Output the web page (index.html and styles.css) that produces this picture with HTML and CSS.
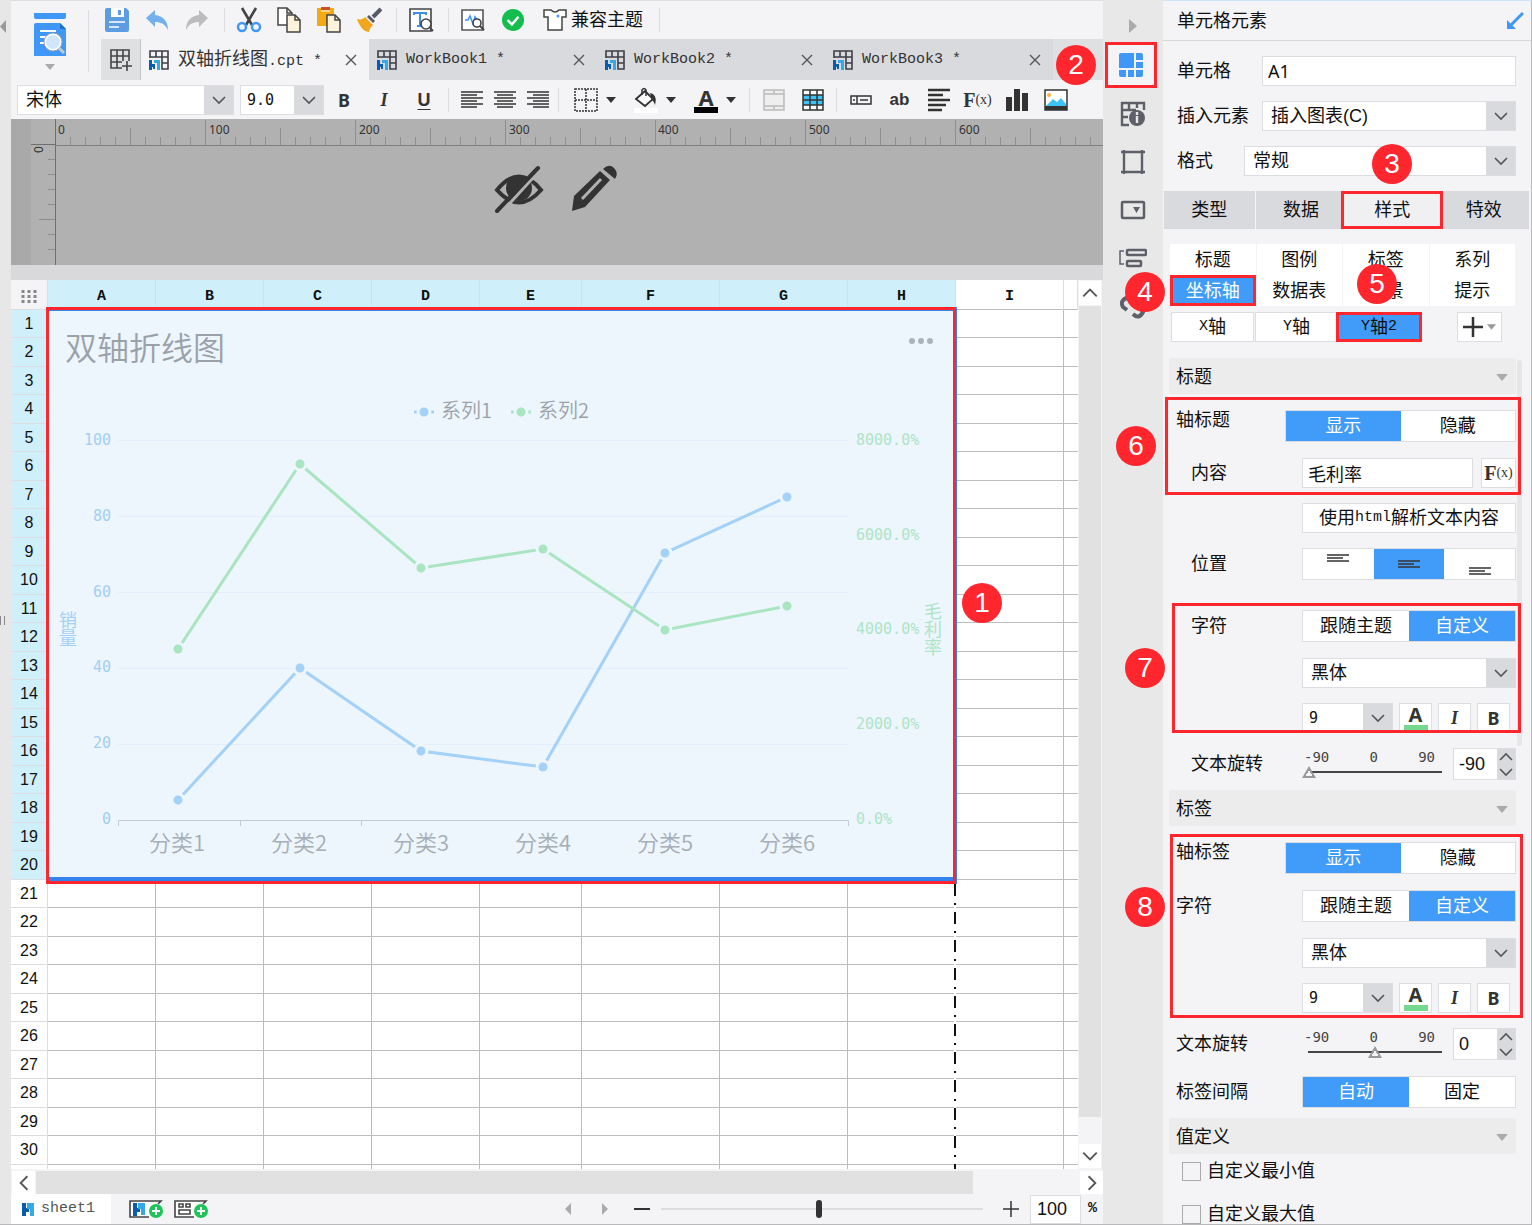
FILE: index.html
```html
<!DOCTYPE html>
<html lang="zh-CN">
<head>
    <meta charset="UTF-8">
    <meta name="viewport" content="width=device-width, initial-scale=1.0">
    <title>双轴折线图.cpt</title>
    <link rel="stylesheet" href="styles.css">
</head>
<body>
    <!-- shared icons -->
    <svg class="sprite" aria-hidden="true">
        <symbol id="i-down" viewBox="0 0 16 16"><path d="M2 5l6 6 6-6" fill="none" stroke="#555" stroke-width="1.6"/></symbol>
        <symbol id="i-caret" viewBox="0 0 10 6"><path d="M0 0h10L5 6z" fill="currentColor"/></symbol>
        <symbol id="i-book" viewBox="0 0 20 20">
            <path d="M1 8V1h18v18h-6V7M1 7h18M7 1v6M13 1v6M13 13h6" fill="none" stroke="#3c3f45" stroke-width="1.6"/>
            <path d="M0 10h3v4h3v5H4v-2H3v3H0z" fill="#0a5cad"/><path d="M5 10h6v10H8v-7H5z" fill="#35a8e6"/>
        </symbol>
        <symbol id="i-close" viewBox="0 0 12 12"><path d="M1 1l10 10M11 1L1 11" stroke="#555" stroke-width="1.4"/></symbol>
        <symbol id="i-lines" viewBox="0 0 22 8"><path d="M0 1h22M0 4h16M0 7h22" stroke="#333" stroke-width="1.5"/></symbol>
        <symbol id="i-plus-dot" viewBox="0 0 14 14"><circle cx="7" cy="7" r="7" fill="#1dc457"/><path d="M7 3v8M3 7h8" stroke="#fff" stroke-width="2"/></symbol>
    </svg>

    <div class="app">
        <div class="edge">
            <svg class="edge-arrow" viewBox="0 0 6 13"><path d="M6 0v13L0 6.500z" fill="#999"/></svg>
            <span class="edge-grip"></span>
        </div>

        <main class="workspace">
            <header class="top">
                <button class="preview" aria-label="预览">
                    <svg width="34" height="46" viewBox="0 0 34 46">
                        <path d="M1 0h32v4q0 2-2 2H3q-2 0-2-2z" fill="#3f98f8"/>
                        <path d="M3 10h24l6 6v27H1V12q0-2 2-2z" fill="#3f98f8"/><path d="M27 10v6h6z" fill="#1f6fc8"/>
                        <path d="M7 18h16M7 24h8M7 30h8" stroke="#fff" stroke-width="2"/>
                        <circle cx="20" cy="29" r="8" fill="#cfe6fb" stroke="#fff" stroke-width="2"/>
                        <circle cx="20" cy="29" r="9" fill="none" stroke="#9aa3ad" stroke-width="1"/>
                        <path d="M26 35l5 5" stroke="#c5c9ce" stroke-width="3"/>
                    </svg>
                    <svg class="caret" width="10" height="6"><use href="#i-caret"/></svg>
                </button>
                <div class="top-main">
                    <div class="toolbar">
                        <button aria-label="保存"><svg width="26" height="26" viewBox="0 0 26 26"><path d="M1 3q0-2 2-2h19l3 3v19q0 2-2 2H3q-2 0-2-2z" fill="#5c9ce0"/><path d="M7 1h13v9H7z" fill="#fff"/><path d="M14 3h3v5h-3z" fill="#5c9ce0"/><path d="M5 15h16M5 20h10" stroke="#fff" stroke-width="1.600"/></svg></button>
                        <button aria-label="撤销"><svg width="24" height="24" viewBox="0 0 24 24"><path d="M10 2v5c8 1 13 6 13 15-3-6-7-8-13-8v5L1 10z" fill="#72b0ee"/></svg></button>
                        <button aria-label="重做"><svg width="24" height="24" viewBox="0 0 24 24"><path d="M14 2v5C6 8 1 13 1 22c3-6 7-8 13-8v5l9-9z" fill="#bcbcbe"/></svg></button>
                        <span class="sep"></span>
                        <button aria-label="剪切"><svg width="26" height="26" viewBox="0 0 26 26"><path d="M6 1l10 17M20 1L10 18" stroke="#444" stroke-width="2.600"/><circle cx="6" cy="20" r="4" fill="none" stroke="#3f98f8" stroke-width="2.500"/><circle cx="20" cy="20" r="4" fill="none" stroke="#3f98f8" stroke-width="2.500"/></svg></button>
                        <button aria-label="复制"><svg width="26" height="26" viewBox="0 0 26 26"><path d="M2 1h9l5 5v12H2z" fill="#fff" stroke="#444" stroke-width="1.500"/><path d="M11 8h8l5 5v12H11z" fill="#fdf3da" stroke="#444" stroke-width="1.500"/><path d="M11 1v5h5M19 8v5h5" fill="none" stroke="#444" stroke-width="1.500"/></svg></button>
                        <button aria-label="粘贴"><svg width="26" height="26" viewBox="0 0 26 26"><path d="M1 1h17v18H1z" fill="#f2ab16"/><path d="M5 0h9v3H5z" fill="#c9502a"/><path d="M5 4h9" stroke="#fff"/><path d="M11 8h8l5 5v12H11z" fill="#fdf3da" stroke="#444" stroke-width="1.500"/><path d="M19 8v5h5" fill="none" stroke="#444" stroke-width="1.500"/></svg></button>
                        <button aria-label="格式刷"><svg width="26" height="26" viewBox="0 0 26 26"><path d="M25 2l-8 8" stroke="#555a66" stroke-width="4"/><path d="M13 8l6 6-2 2-6-6z" fill="#555a66"/><path d="M1 12c4 1 6 0 8-2l8 8c-3 3-4 5-4 7-4 0-9-4-12-13z" fill="#f2a51e"/></svg></button>
                        <span class="sep"></span>
                        <button aria-label="查找"><svg width="26" height="26" viewBox="0 0 26 26"><path d="M2 2h21v22H2z" fill="#fff" stroke="#444" stroke-width="1.600"/><path d="M6 8V6h12v2M12 6v13M9 19h5" fill="none" stroke="#3f8de8" stroke-width="2"/><circle cx="18" cy="17" r="5" fill="#fff" stroke="#444" stroke-width="1.600"/><path d="M22 21l3 3" stroke="#444" stroke-width="2"/></svg></button>
                        <span class="sep"></span>
                        <button aria-label="性能检测"><svg width="24" height="24" viewBox="0 0 24 24"><path d="M1 2h21v20H1z" fill="#fff" stroke="#555" stroke-width="1.600"/><path d="M4 12h3l2-4 3 8 2-7 2 3" fill="none" stroke="#3f98f8" stroke-width="1.600"/><circle cx="16" cy="15" r="4" fill="#fff" stroke="#444" stroke-width="1.600"/><path d="M19 18l4 4" stroke="#444" stroke-width="2"/></svg></button>
                        <button aria-label="校验"><svg width="22" height="22" viewBox="0 0 20 20"><circle cx="10" cy="10" r="10" fill="#14bd4e"/><path d="M5 10l4 4 6-7" fill="none" stroke="#fff" stroke-width="2.200"/></svg></button>
                        <button class="theme"><svg width="24" height="22" viewBox="0 0 24 22"><path d="M1 1h7q4 4 8 0h7v7h-4v13H5V8H1z" fill="#fff" stroke="#444" stroke-width="1.500"/><circle cx="15" cy="7" r="1.500" fill="#3f98f8"/></svg>兼容主题</button>
                        <span class="sep"></span>
                    </div>
                    <nav class="tabs">
                        <button class="new-tab" aria-label="新建"><svg width="22" height="22" viewBox="0 0 22 22"><path d="M12 19H1V1h18v11M1 7h18M1 13h11M7 1v18M13 1v11" fill="none" stroke="#444" stroke-width="1.600"/><path d="M17 12v10M12 17h10" stroke="#444" stroke-width="1.600"/></svg></button>
                        <div class="tab active"><svg width="20" height="20"><use href="#i-book"/></svg><span>双轴折线图<span class="mono">.cpt *</span></span><button aria-label="关闭"><svg width="12" height="12"><use href="#i-close"/></svg></button></div>
                        <div class="tab"><svg width="20" height="20"><use href="#i-book"/></svg><span class="mono">WorkBook1 *</span><button aria-label="关闭"><svg width="12" height="12"><use href="#i-close"/></svg></button></div>
                        <div class="tab"><svg width="20" height="20"><use href="#i-book"/></svg><span class="mono">WorkBook2 *</span><button aria-label="关闭"><svg width="12" height="12"><use href="#i-close"/></svg></button></div>
                        <div class="tab"><svg width="20" height="20"><use href="#i-book"/></svg><span class="mono">WorkBook3 *</span><button aria-label="关闭"><svg width="12" height="12"><use href="#i-close"/></svg></button></div>
                        <span class="badge badge-2">2</span>
                    </nav>
                </div>
            </header>

            <div class="format-bar">
                <div class="select font-family"><select aria-label="字体"><option>宋体</option></select><span class="arrow"><svg width="16" height="16"><use href="#i-down"/></svg></span></div>
                <div class="select font-size"><select aria-label="字号" class="digits"><option>9.0</option></select><span class="arrow"><svg width="16" height="16"><use href="#i-down"/></svg></span></div>
                <button class="fmt bold">B</button>
                <button class="fmt italic">I</button>
                <button class="fmt underline">U</button>
                <span class="sep"></span>
                <button class="fmt align" aria-label="左对齐"><svg width="22" height="18" viewBox="0 0 22 18"><path d="M0 1h22M0 4h16M0 7h22M0 10h16M0 13h22M0 16h16" stroke="#333" stroke-width="1.500"/></svg></button>
                <button class="fmt align" aria-label="居中"><svg width="22" height="18" viewBox="0 0 22 18"><path d="M0 1h22M3 4h16M0 7h22M3 10h16M0 13h22M3 16h16" stroke="#333" stroke-width="1.500"/></svg></button>
                <button class="fmt align" aria-label="右对齐"><svg width="22" height="18" viewBox="0 0 22 18"><path d="M0 1h22M6 4h16M0 7h22M6 10h16M0 13h22M6 16h16" stroke="#333" stroke-width="1.500"/></svg></button>
                <span class="sep"></span>
                <button class="fmt drop" aria-label="边框"><svg width="24" height="24" viewBox="0 0 24 24"><path d="M1 1h22v22H1zM12 1v22M1 12h22" fill="none" stroke="#333" stroke-width="1.500" stroke-dasharray="2 1"/></svg><svg width="10" height="6"><use href="#i-caret"/></svg></button>
                <button class="fmt drop" aria-label="填充"><svg width="24" height="26" viewBox="0 0 24 26"><path d="M2 12l9-8 8 8-8 7z" fill="#fff" stroke="#333" stroke-width="1.800"/><path d="M8 8V3q2-3 4 0v6" fill="none" stroke="#333" stroke-width="1.500"/><path d="M16 6c5 1 7 5 5 12-1-3-2-4-3-5z" fill="#333"/><path d="M0 21h24v5H0z" fill="#fff"/></svg><svg width="10" height="6"><use href="#i-caret"/></svg></button>
                <button class="fmt drop" aria-label="字体颜色"><span class="color-a">A</span><svg width="10" height="6"><use href="#i-caret"/></svg></button>
                <span class="sep"></span>
                <button class="fmt tool" aria-label="合并"><svg width="22" height="22" viewBox="0 0 22 22"><path d="M1 1h20v20H1zM1 5h20M1 17h20M11 1v4M11 17v4" fill="#eee" stroke="#bbb" stroke-width="1.500"/></svg></button>
                <button class="fmt tool" aria-label="表格"><svg width="22" height="22" viewBox="0 0 22 22"><path d="M1 1h20v20H1z" fill="#fff"/><path d="M1 6h20v10H1z" fill="#3ec3f7"/><path d="M1 1h20v20H1zM1 6h20M1 11h20M1 16h20M8 1v20M15 1v20" fill="none" stroke="#333" stroke-width="1.500"/></svg></button>
                <span class="sep"></span>
                <button class="fmt tool" aria-label="控件"><svg width="22" height="10" viewBox="0 0 22 10"><path d="M1 1h20v8H1zM7 1v8M10 5h8M3 5h2" fill="none" stroke="#333" stroke-width="1.500"/></svg></button>
                <button class="fmt tool ab">ab</button>
                <button class="fmt tool" aria-label="富文本"><svg width="22" height="24" viewBox="0 0 22 24"><path d="M0 2h22M0 7h15M0 12h22M0 17h18M0 22h14" stroke="#333" stroke-width="2.400"/></svg></button>
                <button class="fmt tool fx">F<small>(x)</small></button>
                <button class="fmt tool" aria-label="图表"><svg width="22" height="24" viewBox="0 0 22 24"><path d="M0 9h6v14H0zM8 1h6v22H8zM16 5h6v18h-6z" fill="#333"/></svg></button>
                <button class="fmt tool" aria-label="图片"><svg width="24" height="22" viewBox="0 0 24 22"><path d="M1 1h22v20H1z" fill="#fff" stroke="#333" stroke-width="1.500"/><circle cx="5" cy="6" r="2" fill="#ffb42e"/><path d="M2 17l7-7 4 3 4-4 5 6v2z" fill="#3ec3f7"/><path d="M1 17h22v4H1z" fill="#333"/></svg></button>
            </div>

            <section class="canvas">
                <svg class="ruler" width="100%" height="146" aria-hidden="true">
                    <defs>
                        <pattern id="minor" x="44" y="0" width="15" height="26" patternUnits="userSpaceOnUse"><path d="M.5 18v8" stroke="#8e8e8e"/></pattern>
                        <pattern id="mid" x="44" y="0" width="75" height="26" patternUnits="userSpaceOnUse"><path d="M.5 9v17" stroke="#8e8e8e"/></pattern>
                        <pattern id="major" x="44" y="0" width="150" height="26" patternUnits="userSpaceOnUse"><path d="M.5 1v25" stroke="#8e8e8e"/></pattern>
                    </defs>
                    <rect width="20" height="146" fill="#a9a9a9"/>
                    <rect x="44" width="100%" height="26" fill="url(#minor)"/>
                    <rect x="44" width="100%" height="26" fill="url(#mid)"/>
                    <rect x="44" width="100%" height="26" fill="url(#major)"/>
                    <path d="M44.500 0v146M20 25.500h24" stroke="#6f6f6f" fill="none"/>
                    <rect x="45" y="26" width="100%" height="1" fill="#808080"/>
                    <path d="M37 40.500h7M37 55.500h7M37 70.500h7M37 85.500h7M28 100.500h16M37 115.500h7M37 130.500h7" stroke="#8e8e8e"/>
                    <g class="ruler-text">
                        <text x="47" y="15">0</text><text x="198" y="15">100</text><text x="348" y="15">200</text><text x="498" y="15">300</text><text x="647" y="15">400</text><text x="798" y="15">500</text><text x="948" y="15">600</text>
                        <text transform="translate(32 34) rotate(-90)">0</text>
                    </g>
                </svg>
                <div class="canvas-actions">
                    <button aria-label="隐藏"><svg width="50" height="48" viewBox="0 0 50 48"><path d="M3 25Q25-2 47 25 25 50 3 25z" fill="none" stroke="#333" stroke-width="4"/><circle cx="25" cy="23" r="13" fill="#333"/><path d="M47 4L7 48" stroke="#b1b1b1" stroke-width="3"/><path d="M44 3L3 46" stroke="#333" stroke-width="4" stroke-linecap="round"/></svg></button>
                    <button aria-label="编辑"><svg width="48" height="48" viewBox="0 0 48 48"><path d="M1 46l2-15L29 6l10 9-25 27z" fill="#333"/><path d="M11 34L30 14" stroke="#b1b1b1" stroke-width="3"/><path d="M32 4q6-6 11-1t1 11z" fill="#333"/></svg></button>
                </div>
            </section>

            <div class="sheet-wrap">
                <div class="sheet">
                    <table>
                        <colgroup><col class="c-head"><col class="c-m"><col class="c-m"><col class="c-m"><col class="c-m"><col class="c-s"><col class="c-xl"><col class="c-l"><col class="c-m"><col class="c-m"><col></colgroup>
                        <thead>
                            <tr>
                                <th class="corner"><svg width="16" height="14" viewBox="0 0 16 14"><path d="M2 0v14M8 0v14M14 0v14" stroke="#888" stroke-width="3" stroke-dasharray="3 2"/></svg></th>
                                <th class="on">A</th><th class="on">B</th><th class="on">C</th><th class="on">D</th><th class="on">E</th><th class="on">F</th><th class="on">G</th><th class="on">H</th><th>I</th><th></th>
                            </tr>
                        </thead>
                        <tbody id="rows">
                            <tr>
                                <th class="on">1</th>
                                <td class="chart-cell" colspan="8" rowspan="20">
                                    <svg class="chart" viewBox="48 310 908 570">
                                        <text class="chart-title" x="65" y="360">双轴折线图</text>
                                        <g fill="#aab2bb"><circle cx="912" cy="341" r="3"/><circle cx="921" cy="341" r="3"/><circle cx="930" cy="341" r="3"/></g>
                                        <g class="s1"><path d="M414 412h20"/><circle cx="424" cy="412" r="6"/></g>
                                        <text class="legend" x="441" y="418">系列1</text>
                                        <g class="s2"><path d="M511 412h20"/><circle cx="521" cy="412" r="6"/></g>
                                        <text class="legend" x="538" y="418">系列2</text>
                                        <path d="M118 440.500h730M118 516.500h730M118 592.500h730M118 668.500h730M118 744.500h730" stroke="#e3edfb"/>
                                        <path d="M118.500 826v-5.500h730v5.500M240.500 820v6M361.500 820v6" fill="none" stroke="#c3cbd4"/>
                                        <g class="axis left"><text x="111" y="445">100</text><text x="111" y="521">80</text><text x="111" y="597">60</text><text x="111" y="672">40</text><text x="111" y="748">20</text><text x="111" y="824">0</text></g>
                                        <g class="axis right"><text x="856" y="445">8000.0%</text><text x="856" y="540">6000.0%</text><text x="856" y="634">4000.0%</text><text x="856" y="729">2000.0%</text><text x="856" y="824">0.0%</text></g>
                                        <g class="axis-name left"><text x="68" y="627">销</text><text x="68" y="645">量</text></g>
                                        <g class="axis-name right"><text x="933" y="618">毛</text><text x="933" y="636">利</text><text x="933" y="654">率</text></g>
                                        <g class="category"><text x="177" y="851">分类1</text><text x="299" y="851">分类2</text><text x="421" y="851">分类3</text><text x="543" y="851">分类4</text><text x="665" y="851">分类5</text><text x="787" y="851">分类6</text></g>
                                        <g class="s1"><path d="M178 800L300 668 421 751 543 767 665 553 787 497"/><circle cx="178" cy="800" r="6"/><circle cx="300" cy="668" r="6"/><circle cx="421" cy="751" r="6"/><circle cx="543" cy="767" r="6"/><circle cx="665" cy="553" r="6"/><circle cx="787" cy="497" r="6"/></g>
                                        <g class="s2"><path d="M178 649L300 464 421 568 543 549 665 630 787 606"/><circle cx="178" cy="649" r="6"/><circle cx="300" cy="464" r="6"/><circle cx="421" cy="568" r="6"/><circle cx="543" cy="549" r="6"/><circle cx="665" cy="630" r="6"/><circle cx="787" cy="606" r="6"/></g>
                                    </svg>
                                    <span class="selection"></span>
                                    <span class="badge badge-1">1</span>
                                    <span class="page-break"></span>
                                </td>
                                <td></td><td></td>
                            </tr>
                        </tbody>
                    </table>
                </div>
                <div class="v-scroll">
                    <button aria-label="向上"><svg class="up" width="18" height="18"><use href="#i-down"/></svg></button>
                    <span class="v-thumb"></span>
                    <button aria-label="向下"><svg width="18" height="18"><use href="#i-down"/></svg></button>
                </div>
            </div>

            <div class="h-scroll">
                <button aria-label="向左"><svg class="to-left" width="18" height="18"><use href="#i-down"/></svg></button>
                <span class="h-thumb"></span>
                <button aria-label="向右"><svg class="to-right" width="18" height="18"><use href="#i-down"/></svg></button>
            </div>

            <footer class="status">
                <button class="sheet-tab mono"><svg width="12" height="13" viewBox="0 0 12 13"><path d="M0 0h4v5h3v4H4v4H0z" fill="#0a5cad"/><path d="M5 0h7v13H8V6H5z" fill="#35a8e6"/></svg>sheet1</button>
                <button aria-label="新建报表"><svg width="34" height="20" viewBox="0 0 34 20"><path d="M20 18H1V2h31l-3 3" fill="#fff" stroke="#444" stroke-width="1.600"/><path d="M4 4h4v5h3v4H8v4H4z" fill="#0a5cad"/><path d="M9 4h7v12h-4v-6H9z" fill="#35a8e6"/><use href="#i-plus-dot" x="20" y="5" width="14" height="14"/></svg></button>
                <button aria-label="新建聚合"><svg width="34" height="20" viewBox="0 0 34 20"><path d="M20 18H1V2h31l-3 3" fill="#fff" stroke="#444" stroke-width="1.600"/><path d="M5 5h4v3H5zM12 5h4v3h-4zM5 11h11v4H5z" fill="none" stroke="#444" stroke-width="1.600"/><use href="#i-plus-dot" x="20" y="5" width="14" height="14"/></svg></button>
                <div class="zoom">
                    <button class="page" aria-label="上一页"><svg width="6" height="12" viewBox="0 0 6 12"><path d="M6 0v12L0 6z" fill="#aaa"/></svg></button>
                    <button class="page" aria-label="下一页"><svg width="6" height="12" viewBox="0 0 6 12"><path d="M0 0v12l6-6z" fill="#aaa"/></svg></button>
                    <button class="step" aria-label="缩小"><svg width="16" height="16" viewBox="0 0 16 16"><path d="M0 8h16" stroke="#333" stroke-width="2"/></svg></button>
                    <input class="zoom-range" type="range" min="10" max="194" value="100" aria-label="缩放">
                    <button class="step" aria-label="放大"><svg width="16" height="16" viewBox="0 0 16 16"><path d="M0 8h16M8 0v16" stroke="#333" stroke-width="1.500"/></svg></button>
                    <input class="zoom-value" id="zoomValue" type="text" value="100"><label class="mono" for="zoomValue">%</label>
                </div>
            </footer>
        </main>

        <nav class="dock">
            <button class="collapse" aria-label="收起"><svg width="8" height="14" viewBox="0 0 8 14"><path d="M0 0v14l8-7z" fill="#aaa"/></svg></button>
            <button class="active" aria-label="单元格元素"><svg width="26" height="26" viewBox="0 0 26 26" fill="#3f98f8"><path d="M1 3q0-2 2-2h13v15H1zM18 1h5q2 0 2 2v5h-7zM18 10h7v6h-7zM1 18h7v7H3q-2 0-2-2zM10 18h6v7h-6zM18 18h7v5q0 2-2 2h-5z"/></svg></button>
            <button aria-label="单元格属性"><svg width="26" height="26" viewBox="0 0 26 26" fill="none" stroke="#5d6069" stroke-width="2.400"><path d="M9 24H2V2h22v7M2 9h14M2 16h6M9 2v8M17 2v5"/><circle cx="17" cy="17" r="8" fill="#5d6069" stroke="none"/><path d="M17 15v7M17 11v3" stroke="#e8e8e8"/></svg></button>
            <button aria-label="悬浮元素"><svg width="26" height="26" viewBox="0 0 26 26" fill="none" stroke="#5d6069" stroke-width="2.400"><path d="M4 1v24M22 1v24M1 3h24M1 23h24"/></svg></button>
            <button aria-label="控件设置"><svg width="26" height="20" viewBox="0 0 26 20"><rect x="2" y="2" width="22" height="16" rx="1" fill="none" stroke="#5d6069" stroke-width="2.500"/><path d="M13 7h7l-3.500 6z" fill="#5d6069"/></svg></button>
            <button aria-label="条件属性"><svg width="28" height="20" viewBox="0 0 28 20" fill="none" stroke="#5d6069"><path d="M5 3H1v13h4" stroke-width="1.500"/><rect x="8" y="2" width="19" height="5" rx="1" stroke-width="2.500"/><rect x="8" y="13" width="14" height="5" rx="1" stroke-width="2.500"/></svg></button>
            <button aria-label="超级链接"><svg width="26" height="26" viewBox="0 0 26 26" fill="none" stroke="#5d6069" stroke-width="4"><path d="M9 4q-10 3-6 10l4 3M13 21q6 6 10-2l-6-9"/></svg></button>
        </nav>

        <aside class="panel">
            <h2>单元格元素<svg width="18" height="18" viewBox="0 0 18 18"><path d="M17 1L5 13" stroke="#3f98f8" stroke-width="3"/><path d="M1 8v9h9z" fill="#3f98f8"/></svg></h2>

            <div class="fields">
                <div class="row"><label class="w-long" for="cell">单元格</label><input class="box grow arial" id="cell" type="text" value="A1"></div>
                <div class="row"><label class="w-long" for="insert">插入元素</label><div class="select grow"><select id="insert"><option>插入图表(C)</option></select><span class="arrow"><svg width="16" height="16"><use href="#i-down"/></svg></span></div></div>
                <div class="row"><label class="w-short" for="format">格式</label><div class="select grow"><select id="format"><option>常规</option></select><span class="arrow"><svg width="16" height="16"><use href="#i-down"/></svg></span></div></div>
                <span class="badge badge-3">3</span>
            </div>

            <div class="main-tabs"><button>类型</button><button>数据</button><button class="active">样式</button><button>特效</button></div>

            <div class="sub-tabs">
                <button>标题</button><button>图例</button><button>标签</button><button>系列</button>
                <button class="active">坐标轴</button><button>数据表</button><button>背景</button><button>提示</button>
                <span class="badge badge-4">4</span><span class="badge badge-5">5</span>
            </div>

            <div class="axis-tabs">
                <button><span class="mono">X</span>轴</button><button><span class="mono">Y</span>轴</button><button class="active"><span class="mono">Y</span>轴<span class="mono">2</span></button>
                <button class="add" aria-label="添加"><svg width="20" height="20" viewBox="0 0 20 20"><path d="M10 0v20M0 10h20" stroke="#333" stroke-width="2.500"/></svg><svg width="9" height="6"><use href="#i-caret"/></svg></button>
            </div>

            <div class="options">
                <span class="panel-thumb"></span>
                <h3>标题<svg width="12" height="7"><use href="#i-caret"/></svg></h3>
                <div class="group mark-6">
                    <div class="row tall"><span class="name high">轴标题</span><div class="seg wide"><button class="active">显示</button><button>隐藏</button></div></div>
                    <div class="row"><label class="name sub" for="content">内容</label><div class="control"><input class="box grow" id="content" type="text" value="毛利率"><button class="box fx">F<small>(x)</small></button></div></div>
                    <span class="badge badge-6">6</span>
                </div>
                <div class="row"><div class="control"><button class="box grow">使用<span class="mono">html</span>解析文本内容</button></div></div>
                <div class="row tall spaced"><span class="name sub">位置</span><div class="seg pos"><button aria-label="上"><svg width="22" height="8"><use href="#i-lines"/></svg></button><button class="active" aria-label="中"><svg width="22" height="8"><use href="#i-lines"/></svg></button><button aria-label="下"><svg width="22" height="8"><use href="#i-lines"/></svg></button></div></div>
                <div class="group mark-7">
                    <div class="row tall"><span class="name sub">字符</span><div class="seg"><button>跟随主题</button><button class="active">自定义</button></div></div>
                    <div class="row"><div class="control"><div class="select grow"><select aria-label="标题字体"><option>黑体</option></select><span class="arrow"><svg width="16" height="16"><use href="#i-down"/></svg></span></div></div></div>
                    <div class="row"><div class="control fonts"><div class="select size"><select class="digits" aria-label="标题字号"><option>9</option></select><span class="arrow"><svg width="16" height="16"><use href="#i-down"/></svg></span></div><button class="box"><span class="color-a green">A</span></button><button class="box italic">I</button><button class="box bold">B</button></div></div>
                    <span class="badge badge-7">7</span>
                </div>
                <div class="row tall tight"><label class="name sub" for="rotateTitle">文本旋转</label>
                    <div class="control"><div class="rotate"><div class="ticks"><span>-90</span><span>0</span><span>90</span></div><input id="rotateTitle" type="range" min="-90" max="90" value="-90"></div>
                    <div class="spinner"><input type="text" value="-90" aria-label="角度"><div><button aria-label="增加"><svg class="up" width="16" height="16"><use href="#i-down"/></svg></button><button aria-label="减少"><svg width="16" height="16"><use href="#i-down"/></svg></button></div></div></div>
                </div>

                <h3>标签<svg width="12" height="7"><use href="#i-caret"/></svg></h3>
                <div class="group mark-8">
                    <div class="row tall"><span class="name high">轴标签</span><div class="seg wide"><button class="active">显示</button><button>隐藏</button></div></div>
                    <div class="row tall"><span class="name">字符</span><div class="seg"><button>跟随主题</button><button class="active">自定义</button></div></div>
                    <div class="row"><div class="control"><div class="select grow"><select aria-label="标签字体"><option>黑体</option></select><span class="arrow"><svg width="16" height="16"><use href="#i-down"/></svg></span></div></div></div>
                    <div class="row"><div class="control fonts"><div class="select size"><select class="digits" aria-label="标签字号"><option>9</option></select><span class="arrow"><svg width="16" height="16"><use href="#i-down"/></svg></span></div><button class="box"><span class="color-a green">A</span></button><button class="box italic">I</button><button class="box bold">B</button></div></div>
                    <span class="badge badge-8">8</span>
                </div>
                <div class="row tall"><label class="name" for="rotateLabel">文本旋转</label>
                    <div class="control"><div class="rotate"><div class="ticks"><span>-90</span><span>0</span><span>90</span></div><input id="rotateLabel" type="range" min="-90" max="90" value="0"></div>
                    <div class="spinner"><input type="text" value="0" aria-label="角度"><div><button aria-label="增加"><svg class="up" width="16" height="16"><use href="#i-down"/></svg></button><button aria-label="减少"><svg width="16" height="16"><use href="#i-down"/></svg></button></div></div></div>
                </div>
                <div class="row tall tight"><span class="name">标签间隔</span><div class="seg"><button class="active">自动</button><button>固定</button></div></div>

                <h3 class="last">值定义<svg width="12" height="7"><use href="#i-caret"/></svg></h3>
                <label class="check"><input type="checkbox">自定义最小值</label>
                <label class="check"><input type="checkbox">自定义最大值</label>
            </div>
        </aside>
    </div>

    <script src="script.js"></script>
</body>
</html>
```

FILE: styles.css
```css
* {
    box-sizing: border-box;
}
body {
    margin: 0;
    font-family: "Liberation Sans", "Noto Sans CJK SC", sans-serif;
    font-size: 18px;
    line-height: 24px;
    color: #111;
    background-color: #f4f4f6;
}
button, input, select {
    font: inherit;
    color: inherit;
    margin: 0;
    padding: 0;
    border: none;
    background: none;
    border-radius: 0;
    outline: none;
}
button {
    cursor: pointer;
    display: flex;
    align-items: center;
    justify-content: center;
}
svg {
    flex: none;
    display: block;
}
.sprite {
    position: absolute;
    width: 0;
    height: 0;
}
.mono {
    font-family: "Liberation Mono", "Noto Sans CJK SC", monospace;
    font-size: 15px;
}
.digits {
    font-family: "DejaVu Sans Mono", monospace;
    font-size: 15px;
}
.grow {
    flex: 1;
    min-width: 0;
}
.up {
    transform: rotate(180deg);
}
.to-left {
    transform: rotate(90deg);
}
.to-right {
    transform: rotate(-90deg);
}
.app {
    display: flex;
    height: 100vh;
    overflow: hidden;
    border-bottom: 1px solid #b9b9bb;
}

/* left edge */
.edge {
    width: 11px;
    background-color: #e7e7e7;
    display: flex;
    flex-direction: column;
    justify-content: space-between;
    padding: 20px 0 599px;
}
.edge-arrow {
    width: 6px;
    height: 13px;
}
.edge-grip {
    width: 5px;
    height: 9px;
    border-left: 1px solid #888;
    border-right: 1px solid #888;
}

/* toolbars */
.workspace {
    flex: 1;
    min-width: 0;
    display: flex;
    flex-direction: column;
}
.top {
    display: flex;
    height: 80px;
    border-top: 1px solid #dedee0;
}
.preview {
    width: 78px;
    flex-direction: column;
    gap: 5px;
    border-right: 1px solid #dcdcde;
    margin: 9px 0 8px;
}
.caret {
    color: #aaa;
}
.top-main {
    flex: 1;
    min-width: 0;
    display: flex;
    flex-direction: column;
}
.toolbar {
    flex: 1;
    display: flex;
    align-items: center;
    padding-left: 8px;
}
.toolbar button {
    width: 40px;
    height: 36px;
}
.toolbar .theme {
    width: auto;
    gap: 4px;
    padding: 0 9px 0 10px;
}
.sep {
    width: 1px;
    height: 24px;
    background-color: #dcdcde;
    margin: 0 4px 0 7px;
}
.tabs {
    position: relative;
    display: flex;
    height: 41px;
    margin-left: 12px;
    background-color: #dfe0e2;
}
.new-tab {
    width: 40px;
    border-right: 1px solid #c5c5c7;
}
.tab {
    width: 228px;
    display: flex;
    align-items: center;
    padding: 1px 12px 0 8px;
    gap: 9px;
    background-color: #d9dade;
    color: #333;
    white-space: nowrap;
}
.tab.active {
    background-color: #f4f4f6;
}
.tab button {
    margin-left: auto;
}
.format-bar {
    height: 39px;
    display: flex;
    align-items: center;
    padding-left: 6px;
}
.font-family {
    width: 217px;
    margin-right: 6px;
}
.font-size {
    width: 84px;
}
.format-bar .sep {
    margin: 0 4px;
}
.format-bar .underline + .sep, .format-bar .align + .sep {
    margin-right: 6px;
}
.fmt {
    height: 32px;
    color: #333;
}
.fmt.bold, .fmt.italic, .fmt.underline {
    width: 40px;
}
.bold {
    font-family: "Noto Sans", sans-serif;
    font-weight: bold;
    color: #333;
}
.italic {
    font-family: "Liberation Serif", serif;
    font-style: italic;
    font-weight: bold;
    color: #333;
}
.fmt.underline {
    font-weight: bold;
    text-decoration: underline;
    text-underline-offset: 3px;
}
.align {
    width: 33px;
}
.format-bar .drop {
    width: 60px;
    gap: 8px;
}
.tool {
    width: 39px;
}
.ab {
    font-weight: bold;
    font-size: 17px;
}
.fx {
    font-family: "Liberation Serif", serif;
    font-weight: bold;
    font-size: 20px;
    color: #333;
}
.fx small {
    font-size: 14px;
    font-weight: normal;
}
.color-a {
    width: 24px;
    height: 26px;
    font-family: "Noto Sans", sans-serif;
    font-size: 22px;
    line-height: 20px;
    font-weight: bold;
    color: #333;
    border-bottom: 6px solid #000;
}
.color-a.green {
    height: 25px;
    font-size: 20px;
    line-height: 18px;
    border-color: #74d98e;
}

/* inputs */
.select {
    position: relative;
    height: 30px;
    border: 1px solid #dcdde0;
    background-color: #fff;
}
.select select {
    width: 100%;
    height: 28px;
    padding: 0 30px 0 8px;
    appearance: none;
}
.select .digits {
    padding-left: 6px;
}
.arrow {
    position: absolute;
    top: 0;
    right: 0;
    width: 29px;
    height: 28px;
    display: flex;
    align-items: center;
    justify-content: center;
    background-color: #d9dade;
    pointer-events: none;
}
.box {
    height: 30px;
    border: 1px solid #dcdde0;
    background-color: #fff;
    padding: 0 5px;
}
.arial {
    font-family: "Noto Sans", sans-serif;
}

/* canvas above the sheet */
.canvas {
    position: relative;
    height: 161px;
    background-color: #b1b1b1;
    border-bottom: 15px solid #d9d9db;
}
.ruler-text {
    font-family: "Noto Sans", sans-serif;
    font-size: 12px;
    fill: #333;
}
.canvas-actions {
    position: absolute;
    top: 46px;
    left: 0;
    right: 2px;
    display: flex;
    justify-content: center;
    gap: 27px;
}

/* sheet */
.sheet-wrap {
    flex: 1;
    min-height: 0;
    display: flex;
}
.sheet {
    flex: 1;
    min-width: 0;
    overflow: hidden;
    background-color: #fff;
}
table {
    width: 100%;
    table-layout: fixed;
    border-collapse: separate;
    border-spacing: 0;
}
.c-head {
    width: 37px;
}
.c-s {
    width: 102px;
}
.c-m {
    width: 108px;
}
.c-l {
    width: 128px;
}
.c-xl {
    width: 138px;
}
thead tr {
    height: 30px;
}
tbody tr {
    height: 28px;
}
tbody tr:nth-child(even) {
    height: 29px;
}
th, td {
    padding: 0;
    border-right: 1px solid #bdbdbd;
    border-bottom: 1px solid #bdbdbd;
}
th {
    font-weight: normal;
    font-size: 16px;
    line-height: 18px;
    border-color: #dcdde0;
}
thead th {
    font-family: "Liberation Mono", monospace;
    font-size: 15px;
    font-weight: bold;
    padding-top: 5px;
}
thead th:nth-last-child(-n+2) {
    border-bottom-color: #bdbdbd;
}
th.on {
    background-color: #cfeffb;
}
.corner {
    background-color: #f4f4f6;
}
.corner svg {
    margin: 0 auto;
}
td:last-child {
    border-right: none;
}
.chart-cell {
    position: relative;
    border: none;
    background-color: #edf5fd;
}
.chart {
    position: absolute;
    top: 0;
    left: 0;
    width: 100%;
    height: 100%;
}
.chart text {
    font-family: "Noto Sans CJK SC", sans-serif;
    fill: #9aa1a8;
}
.chart-title {
    font-size: 32px;
    font-weight: 350;
}
.chart .legend {
    font-size: 20px;
    font-weight: 350;
}
.category {
    font-size: 22px;
    font-weight: 350;
    text-anchor: middle;
}
.chart .category text {
    fill: #a6adb4;
}
.chart .axis text {
    font-family: "DejaVu Sans Mono", monospace;
    font-size: 15px;
}
.axis.left {
    text-anchor: end;
}
.axis-name {
    font-size: 18px;
    text-anchor: middle;
}
.chart .left text {
    fill: #a3cff6;
}
.chart .right text {
    fill: #ade5c5;
}
.s1 path, .s2 path {
    fill: none;
    stroke: #a3d1f7;
    stroke-width: 3;
}
.s2 path {
    stroke: #a9e5c0;
}
.s1 circle, .s2 circle {
    fill: #a3d1f7;
    stroke: #edf5fd;
    stroke-width: 3;
}
.s2 circle {
    fill: #a9e5c0;
}
.selection {
    position: absolute;
    top: -3px;
    left: -2px;
    right: 0;
    bottom: -4px;
    border: 3px solid #ff262d;
    box-shadow: inset 0 -4px #3583f0, inset 0 1px #3583f0, 1px 0 #3583f0;
}
.page-break {
    position: absolute;
    top: 100%;
    right: 0;
    width: 2px;
    height: 289px;
    margin-top: 4px;
    background: repeating-linear-gradient(#111 0 12px, #fff 12px 19px, #111 19px 21px, #fff 21px 28px);
}
.v-scroll {
    width: 25px;
    display: flex;
    flex-direction: column;
    border-right: 1px solid #e7e7e7;
}
.v-scroll button {
    height: 24px;
    margin: 1px;
    background-color: #fff;
}
.v-thumb {
    height: 811px;
    margin: 0 1px auto;
    background-color: #e1e1e1;
}
.h-scroll {
    display: flex;
    height: 25px;
    padding: 2px 0 0 1px;
}
.h-scroll button {
    width: 23px;
    background-color: #fff;
}
.h-thumb {
    width: 937px;
    margin: 0 auto 0 1px;
    background-color: #e1e1e1;
}
.status {
    display: flex;
    height: 30px;
    align-items: center;
}
.sheet-tab {
    width: 100px;
    height: 30px;
    padding-right: 5px;
    margin-right: 18px;
    gap: 7px;
    color: #555;
    background-color: #fff;
}
.sheet-tab + button {
    margin-right: 11px;
}
.zoom {
    display: flex;
    align-items: center;
    margin-left: auto;
    padding-right: 6px;
}
.page {
    width: 37px;
}
.step {
    width: 37px;
}
.zoom-range {
    appearance: none;
    width: 322px;
    height: 20px;
    margin-right: 10px;
    background: linear-gradient(#dcdcde, #dcdcde) center / 100% 2px no-repeat;
}
.zoom-range::-webkit-slider-thumb {
    appearance: none;
    width: 6px;
    height: 18px;
    border-radius: 3px;
    background-color: #333;
}
.zoom-value {
    width: 51px;
    height: 29px;
    padding-left: 6px;
    border: 1px solid #dcdde0;
    background-color: #fff;
    margin-right: 7px;
}
.zoom label {
    font-weight: bold;
}

/* dock */
.dock {
    width: 60px;
    display: flex;
    flex-direction: column;
    align-items: center;
    background-color: #e8e8e8;
}
.dock button {
    width: 52px;
    height: 48px;
}
.dock .collapse {
    height: 32px;
    margin-top: 10px;
}
.dock .active {
    height: 46px;
    margin-bottom: 2px;
    margin-right: 4px;
    border: 3px solid #ff262d;
    background-color: #f4f4f6;
}

/* property panel */
.panel {
    width: 369px;
    border-top: 1px solid #cfe4f5;
    border-right: 1px solid #b9b9bb;
}
.panel h2, .panel h3 {
    margin: 0;
    display: flex;
    align-items: center;
    justify-content: space-between;
    font-size: 18px;
    font-weight: normal;
}
.panel h2 {
    height: 40px;
    padding: 0 7px 0 14px;
    border-bottom: 1px solid #d6d7d9;
}
.fields {
    position: relative;
    padding: 15px 15px 0 14px;
}
.row {
    display: flex;
    align-items: center;
    height: 30px;
    margin-bottom: 15px;
}
.row.tall {
    height: 32px;
    margin-bottom: 16px;
}
.row.tight {
    margin-bottom: 10px;
}
.row.tall.tight {
    margin-bottom: 10px;
}
.row.tall.spaced {
    margin-bottom: 30px;
}
.w-long {
    width: 85px;
}
.w-short {
    width: 67px;
}
.main-tabs {
    display: flex;
    gap: 1px;
    padding: 0 2px 0 1px;
}
.main-tabs button {
    flex: 1;
    height: 38px;
    background-color: #d9dade;
}
.main-tabs .active {
    flex: 0 0 102px;
    margin: 0 -6px;
    z-index: 1;
    border: 3px solid #ff262d;
    background-color: #f0f0f2;
}
.sub-tabs {
    position: relative;
    display: grid;
    grid-template-columns: repeat(4, 1fr);
    column-gap: 1px;
    margin: 15px 16px 6px 7px;
}
.sub-tabs button {
    height: 31px;
    background-color: #fff;
}
.sub-tabs .active, .axis-tabs .active {
    border: 3px solid #ff262d;
    background-color: #419cf9;
    color: #fff;
}
.axis-tabs {
    display: flex;
    gap: 1px;
    margin: 0 29px 0 8px;
}
.axis-tabs button {
    width: 83px;
    height: 30px;
    border: 1px solid #dcdde0;
    background-color: #fff;
}
.axis-tabs .active {
    width: 86px;
    margin-left: -3px;
    border: 3px solid #ff262d;
    background-color: #419cf9;
    color: #111;
}
.axis-tabs .add {
    width: 45px;
    gap: 4px;
    margin-left: auto;
}
.axis-tabs .add svg:last-child {
    color: #999;
}
.options {
    position: relative;
    margin-top: 16px;
    padding: 0 15px 0 6px;
}
.panel-thumb {
    position: absolute;
    top: 2px;
    right: 9px;
    width: 5px;
    height: 386px;
    border-radius: 3px;
    background-color: #e6e6e6;
}
.panel h3 {
    height: 36px;
    margin-bottom: 16px;
    padding: 2px 8px 0 7px;
    background-color: #ececec;
}
.panel h3 svg {
    color: #aaa;
}
.panel h3.last {
    margin-bottom: 0;
}
.group {
    position: relative;
}
.group::after {
    content: "";
    position: absolute;
    border: 3px solid #ff262d;
    pointer-events: none;
}
.mark-6::after {
    inset: -13px -5px -7px -4px;
}
.mark-7::after {
    inset: -7px -5px 0 3px;
}
.mark-8::after {
    inset: -8px -7px -5px 1px;
}
.name {
    padding-left: 7px;
}
.name.sub {
    padding-left: 22px;
}
.name.high {
    align-self: flex-start;
    margin-top: -2px;
}
.control, .seg {
    display: flex;
    width: 214px;
    margin-left: auto;
}
.control {
    gap: 8px;
}
.control .fx {
    width: 35px;
    padding: 0;
}
.seg {
    height: 32px;
    border: 1px solid #dcdde0;
}
.seg.wide {
    width: 231px;
}
.seg button {
    flex: 1;
    background-color: #fff;
}
.seg .active {
    background-color: #419cf9;
    color: #fff;
}
.seg.pos button:first-child {
    align-items: flex-start;
    padding-top: 5px;
}
.seg.pos button:last-child {
    align-items: flex-end;
    padding-bottom: 4px;
}
.fonts {
    gap: 6px;
}
.size {
    width: 91px;
}
.fonts .box {
    width: 33px;
    padding: 0;
}
.rotate {
    width: 143px;
}
.rotate + .spinner {
    width: 63px;
}
.ticks {
    display: flex;
    justify-content: space-between;
    padding: 0 10px 0 2px;
    font-family: "DejaVu Sans Mono", monospace;
    font-size: 14px;
    line-height: 18px;
    color: #444;
}
.rotate input {
    appearance: none;
    display: block;
    width: 146px;
    height: 12px;
    background: linear-gradient(#444, #444) 6px 5px / 134px 2px no-repeat;
}
.rotate input::-webkit-slider-thumb {
    appearance: none;
    width: 14px;
    height: 12px;
    clip-path: polygon(50% 0, 100% 100%, 0 100%);
    border-bottom: 2px solid #999;
    background: conic-gradient(from 150deg at 50% 4px, #f4f4f6 60deg, #999 0);
}
.spinner {
    display: flex;
    height: 32px;
    border: 1px solid #dcdde0;
    background-color: #fff;
}
.spinner input {
    width: 43px;
    padding-left: 5px;
}
.spinner div {
    flex: 1;
    background-color: #d9dade;
}
.spinner button {
    width: 100%;
    height: 15px;
}
.check {
    display: flex;
    align-items: center;
    gap: 6px;
    height: 34px;
    margin-bottom: 9px;
    padding-left: 13px;
}
.check input {
    appearance: none;
    width: 19px;
    height: 19px;
    border: 1px solid #aaa;
}

/* numbered markers */
.badge {
    position: absolute;
    z-index: 2;
    width: 40px;
    height: 40px;
    border-radius: 50%;
    background-color: #ff262d;
    color: #fff;
    font-family: "Liberation Sans", sans-serif;
    font-size: 28px;
    line-height: 40px;
    text-align: center;
}
.badge-1 {
    top: 273px;
    right: -46px;
}
.badge-2 {
    top: 6px;
    right: 7px;
}
.badge-3 {
    top: 103px;
    right: 119px;
}
.badge-4 {
    top: 28px;
    left: -45px;
}
.badge-5 {
    top: 20px;
    left: 187px;
}
.badge-6 {
    top: 16px;
    left: -53px;
}
.badge-7 {
    top: 38px;
    left: -44px;
}
.badge-8 {
    top: 45px;
    left: -44px;
}
```

FILE: script.js
```js
// rows 2-20 sit beside the merged chart cell, the rest are empty cells
const body = document.getElementById('rows');
for (let n = 2; n <= 31; n++) {
    const row = body.insertRow();
    const head = document.createElement('th');
    // the last row is only a sliver above the scrollbar
    if (n <= 30) head.textContent = n;
    if (n <= 20) head.className = 'on';
    row.appendChild(head);
    const cells = n <= 20 ? 2 : 10;
    for (let i = 0; i < cells; i++) row.insertCell();
}
```
